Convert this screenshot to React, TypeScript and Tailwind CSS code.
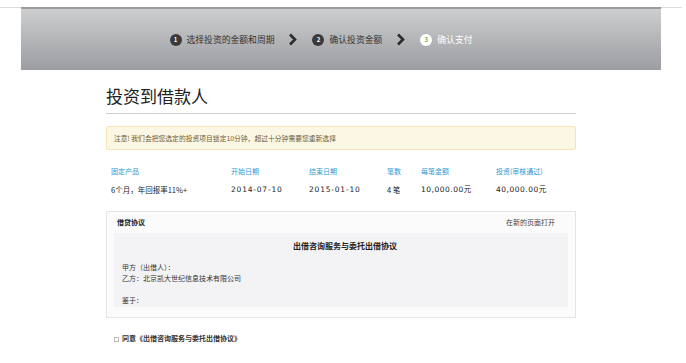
const font = { fontFamily: '"Noto Sans CJK SC", "Noto Sans", sans-serif' };
const numFont = { fontFamily: '"DejaVu Sans", "Noto Sans CJK SC", sans-serif' };

const steps = [
  { n: "1", label: "选择投资的金额和周期", active: false },
  { n: "2", label: "确认投资金额", active: false },
  { n: "3", label: "确认支付", active: true },
];

const Chevron = () => (
  <svg width="9" height="13" viewBox="0 0 9 13" className="ml-[14px] mr-[15px]">
    <polyline points="2,1.5 7,6.5 2,11.5" fill="none" stroke="#2b2b2b" strokeWidth="2.6" />
  </svg>
);

const App = () => {
  return (
    <div className="w-[682px] min-h-screen bg-white text-[#333]" style={font}>
      {/* top strip */}
      <div className="h-[8px] border-b border-[#dcdcdc]" />
      <div className="mx-auto -mt-[1px] w-[640px] h-[63px] pr-[40px] border-t-2 border-[#9b9b9b] bg-gradient-to-b from-[#cdcecf] to-[#9c9da1] flex items-center justify-center">
        {steps.map((s, i) => (
          <div key={s.n} className="flex items-center">
            {i > 0 && <Chevron />}
            <span
              className={
                s.active
                  ? "w-[12px] h-[12px] rounded-full bg-white text-[#5cb85c] text-[6px] font-bold flex items-center justify-center"
                  : "w-[12px] h-[12px] rounded-full bg-[#3a3a3a] text-white text-[6px] font-bold flex items-center justify-center"
              }
            >
              {s.n}
            </span>
            <span className={s.active ? "ml-[5px] text-[8.8px] text-white" : "ml-[5px] text-[8.8px] text-[#333]"}>
              {s.label}
            </span>
          </div>
        ))}
      </div>

      <div className="mx-auto w-[470px]">
        {/* title */}
        <div className="mt-[14px] pb-[5px] border-b border-[#cfcfcf]">
          <h1 className="text-[17px] leading-[24px] text-[#222]">投资到借款人</h1>
        </div>

        {/* notice */}
        <div className="mt-[12px] h-[24px] flex items-center pl-[7px] rounded-[2px] border border-[#f6e4b8] bg-[#fcf7e4] text-[6.8px] text-[#6d5a36]">
          注意! 我们会把您选定的投资项目锁定10分钟，超过十分钟需要您重新选择
        </div>

        {/* table */}
        <div className="mt-[15px] pl-[5px] grid grid-cols-[120px_78px_78px_34px_75px_1fr] text-[7px] leading-[12px]">
          <span className="text-[#2e9ad5]">固定产品</span>
          <span className="text-[#2e9ad5]">开始日期</span>
          <span className="text-[#2e9ad5]">结束日期</span>
          <span className="text-[#2e9ad5]">笔数</span>
          <span className="text-[#2e9ad5]">每笔金额</span>
          <span className="text-[#2e9ad5]">投资(审核通过)</span>
        </div>
        <div className="mt-[7px] pl-[5px] grid grid-cols-[120px_78px_78px_34px_75px_1fr] text-[7.5px] leading-[12px] text-[#222]">
          <span>6个月，年回报率11%+</span>
          <span className="text-[7.5px] tracking-[0.8px]" style={numFont}>2014-07-10</span>
          <span className="text-[7.5px] tracking-[0.8px]" style={numFont}>2015-01-10</span>
          <span>4 笔</span>
          <span className="text-[7.5px] tracking-[0.5px]" style={numFont}>10,000.00元</span>
          <span className="text-[7.5px] tracking-[0.5px]" style={numFont}>40,000.00元</span>
        </div>

        {/* agreement */}
        <div className="mt-[15px] h-[107px] border border-[#e4e4e4] bg-[#fbfbfb] px-[7px] flex flex-col">
          <div className="h-[21px] flex items-center justify-between pl-[3px] pr-[13px] text-[7px]">
            <span className="font-bold text-[#222]">借贷协议</span>
            <span className="text-[#444]">在新的页面打开</span>
          </div>
          <div className="h-[74px] bg-[#f3f3f5] pl-[8px] text-[7px] text-[#333]">
            <div className="mt-[7px] text-center font-bold text-[8px] leading-[12px] text-[#222]">出借咨询服务与委托出借协议</div>
            <div className="mt-[10px] leading-[11px]">甲方（出借人）：</div>
            <div className="leading-[11px]">乙方：北京凯大世纪信息技术有限公司</div>
            <div className="mt-[11px] leading-[11px]">鉴于：</div>
          </div>
        </div>

        {/* agree */}
        <div className="mt-[15px] pl-[8px] flex items-center text-[7px] font-bold text-[#333]">
          <span className="mt-[2px] w-[5px] h-[5px] border border-[#bbb] bg-white" />
          <span className="ml-[3px]">同意《出借咨询服务与委托出借协议》</span>
        </div>
      </div>
    </div>
  );
};

export default App;
